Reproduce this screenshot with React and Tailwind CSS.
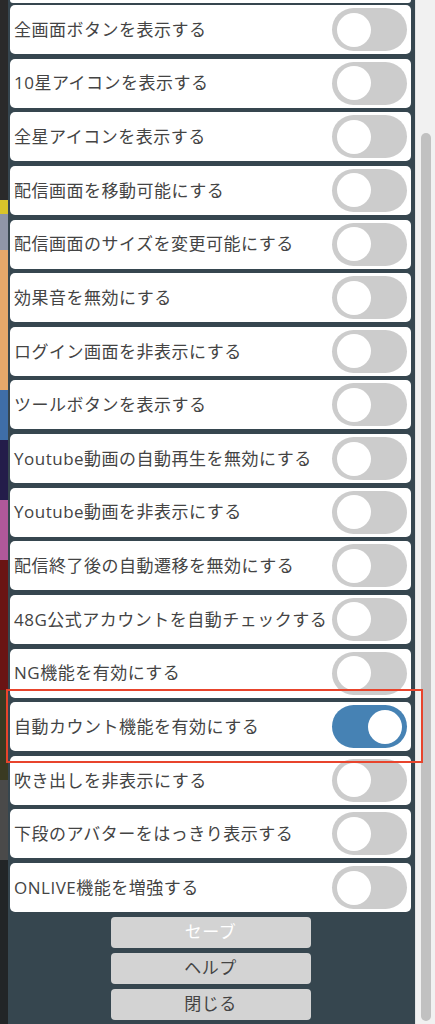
const items = [
  { label: "全画面ボタンを表示する", on: false },
  { label: "10星アイコンを表示する", on: false },
  { label: "全星アイコンを表示する", on: false },
  { label: "配信画面を移動可能にする", on: false },
  { label: "配信画面のサイズを変更可能にする", on: false },
  { label: "効果音を無効にする", on: false },
  { label: "ログイン画面を非表示にする", on: false },
  { label: "ツールボタンを表示する", on: false },
  { label: "Youtube動画の自動再生を無効にする", on: false },
  { label: "Youtube動画を非表示にする", on: false },
  { label: "配信終了後の自動遷移を無効にする", on: false },
  { label: "48G公式アカウントを自動チェックする", on: false },
  { label: "NG機能を有効にする", on: false },
  { label: "自動カウント機能を有効にする", on: true },
  { label: "吹き出しを非表示にする", on: false },
  { label: "下段のアバターをはっきり表示する", on: false },
  { label: "ONLIVE機能を増強する", on: false },
];

const strip = [
  ["h-[200px]", "bg-[#2a2a2a]"],
  ["h-[14px]", "bg-[#d9c52a]"],
  ["h-[36px]", "bg-[#8f96a8]"],
  ["h-[140px]", "bg-[#e6a86a]"],
  ["h-[50px]", "bg-[#3f6ea8]"],
  ["h-[60px]", "bg-[#241c4a]"],
  ["h-[60px]", "bg-[#b0589a]"],
  ["h-[130px]", "bg-[#6a1414]"],
  ["h-[90px]", "bg-[#3a3a22]"],
  ["h-[80px]", "bg-[#4a4a4a]"],
  ["h-[164px]", "bg-[#222527]"],
];

const Toggle = ({ on }) => (
  <div
    className={
      on
        ? "w-[75px] h-[43px] rounded-full bg-[#4682b4] flex items-center justify-end px-[5px] shrink-0"
        : "w-[75px] h-[43px] rounded-full bg-[#cccccc] flex items-center justify-start px-[5px] shrink-0"
    }
  >
    <div className="w-[34px] h-[34px] rounded-full bg-white" />
  </div>
);

export default function App() {
  return (
    <div
      className="relative flex w-[435px] h-[1024px] overflow-hidden"
      style={{ fontFamily: '"Open Sans", "Noto Sans CJK JP", sans-serif' }}
    >
      <div className="w-[8px] flex flex-col shrink-0">
        {strip.map(([h, c], i) => (
          <div key={i} className={`${h} ${c}`} />
        ))}
      </div>

      <div className="w-[407px] bg-[#36464f] flex flex-col pl-[2px] pr-[4px] shrink-0">
        <div className="h-[2.5px] bg-white rounded-b-[4px]" />
        <div className="flex flex-col gap-[4.64px] mt-[2.5px]">
          {items.map((it) => (
            <div
              key={it.label}
              className="h-[49px] bg-white rounded-[5px] flex items-center justify-between pl-[4px] pr-[4px]"
            >
              <span className="text-[17px] text-[#444444] whitespace-nowrap tracking-[0.5px]">
                {it.label}
              </span>
              <Toggle on={it.on} />
            </div>
          ))}
        </div>
        <div className="flex flex-col items-center gap-[5px] mt-[4.7px]">
          <button className="w-[200px] h-[31px] rounded-[4px] bg-[#d3d3d3] text-white text-[17px] tracking-[0.5px]">
            セーブ
          </button>
          <button className="w-[200px] h-[31px] rounded-[4px] bg-[#d3d3d3] text-[#444444] text-[17px] tracking-[0.5px]">
            ヘルプ
          </button>
          <button className="w-[200px] h-[31px] rounded-[4px] bg-[#d3d3d3] text-[#444444] text-[17px] tracking-[0.5px]">
            閉じる
          </button>
        </div>
      </div>

      <div className="w-[20px] bg-[#f1f1f1] border-l border-[#e4e4e4] flex flex-col items-center pt-[133px] pb-[3px] shrink-0">
        <div className="w-[10px] flex-1 rounded-full bg-[#c1c1c1]" />
      </div>

      <div className="absolute left-[6px] top-[689px] w-[417px] h-[74px] border-[2.5px] border-[#e8442c]" />
    </div>
  );
}
